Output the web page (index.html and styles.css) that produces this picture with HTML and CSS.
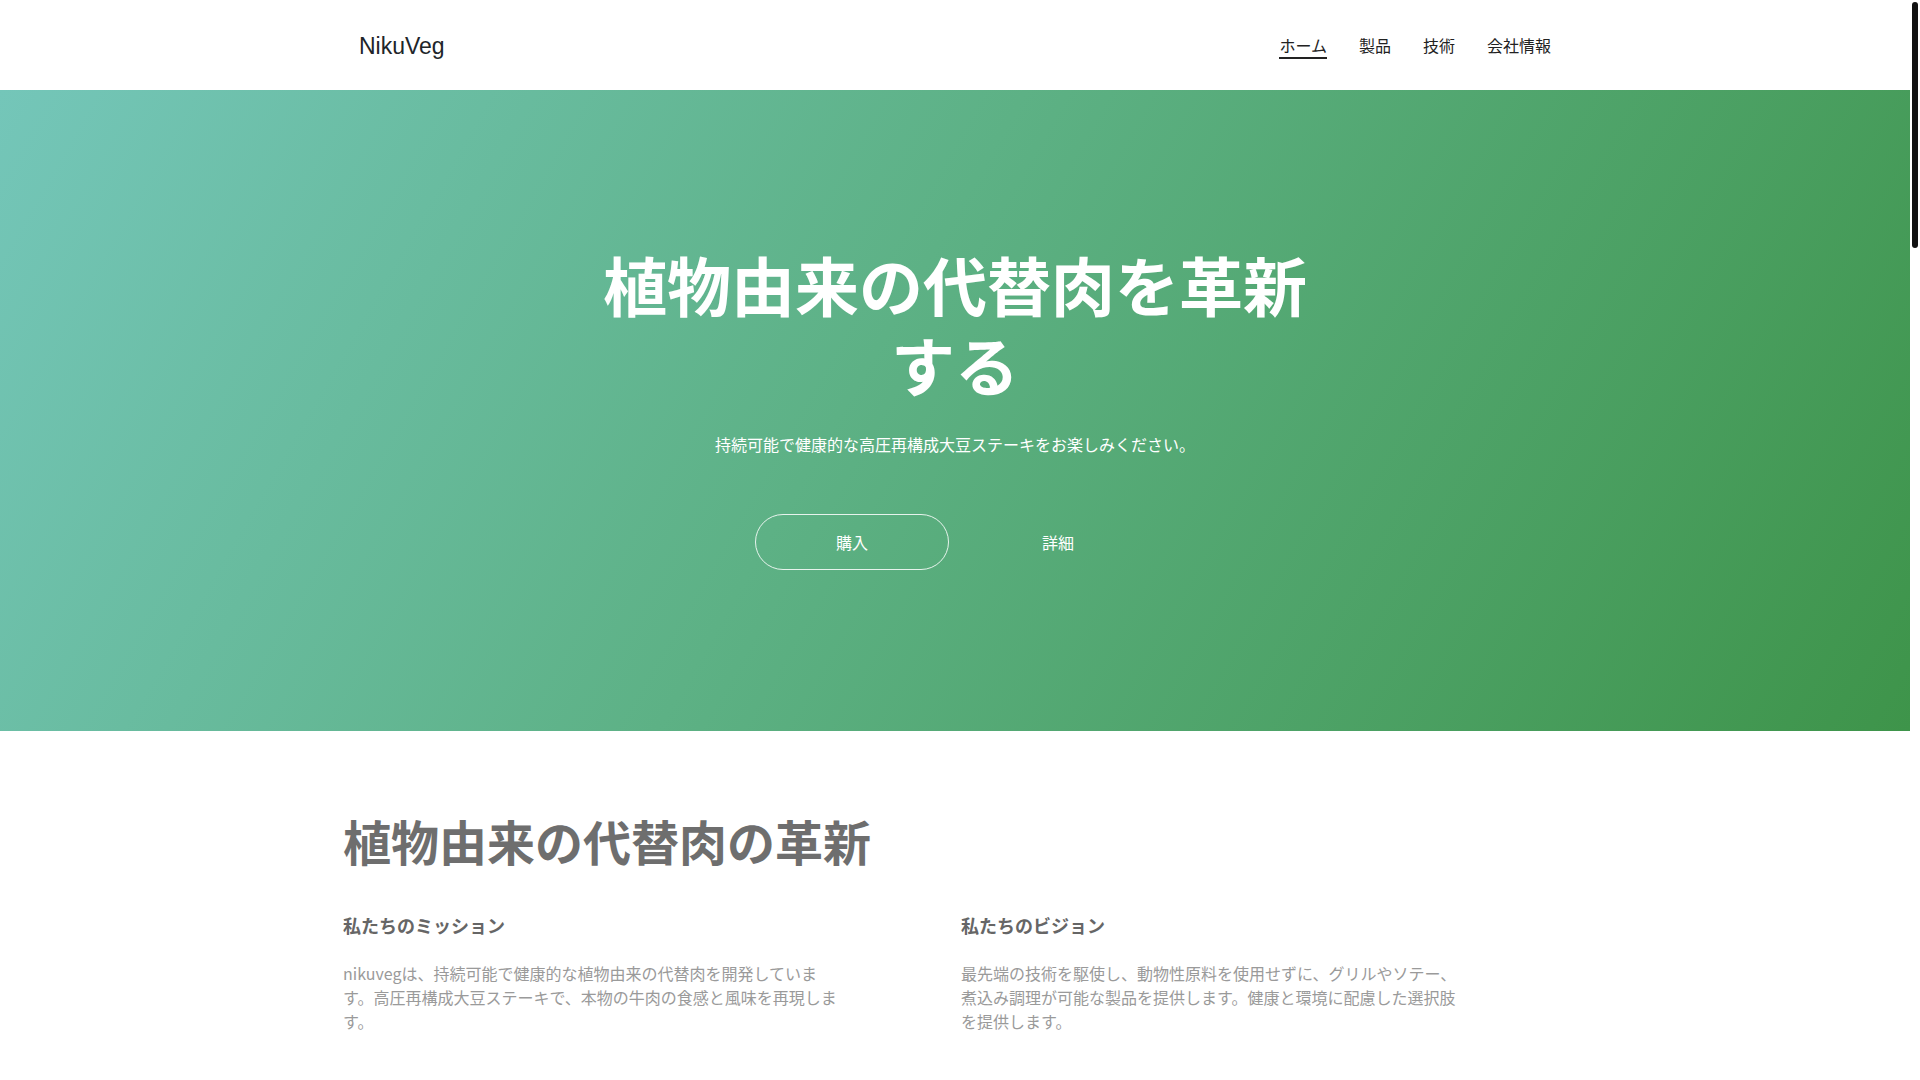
FILE: index.html
```html
<!DOCTYPE html>
<html lang="ja">
<head>
<meta charset="utf-8">
<title>NikuVeg</title>
<link rel="stylesheet" href="styles.css">
</head>
<body>
<div class="page">
<header class="site-header">
  <div class="container header-inner">
    <a class="logo" href="#">NikuVeg</a>
    <nav class="nav">
      <a class="nav-link active" href="#">ホーム</a>
      <a class="nav-link" href="#products">製品</a>
      <a class="nav-link" href="#tech">技術</a>
      <a class="nav-link" href="#company">会社情報</a>
    </nav>
  </div>
</header>

<section class="hero">
  <div class="hero-content">
    <h1 class="hero-title">植物由来の代替肉を革新する</h1>
    <p class="hero-sub">持続可能で健康的な高圧再構成大豆ステーキをお楽しみください。</p>
    <div class="hero-buttons">
      <a class="btn btn-outline" href="#products">購入</a>
      <a class="btn btn-plain" href="#about">詳細</a>
    </div>
  </div>
</section>

<section class="about" id="about">
  <div class="container">
    <h2 class="section-title">植物由来の代替肉の革新</h2>
    <div class="two-col">
      <div class="col">
        <h3 class="col-title">私たちのミッション</h3>
        <p class="col-text">nikuvegは、持続可能で健康的な植物由来の代替肉を開発しています。高圧再構成大豆ステーキで、本物の牛肉の食感と風味を再現します。</p>
      </div>
      <div class="col">
        <h3 class="col-title">私たちのビジョン</h3>
        <p class="col-text">最先端の技術を駆使し、動物性原料を使用せずに、グリルやソテー、煮込み調理が可能な製品を提供します。健康と環境に配慮した選択肢を提供します。</p>
      </div>
    </div>
  </div>
</section>

<section class="block" id="products">
  <div class="container">
    <h2 class="section-title">製品</h2>
    <div class="two-col">
      <div class="col">
        <h3 class="col-title">大豆ステーキ</h3>
        <p class="col-text">高圧再構成技術で作られた、しっかりとした噛みごたえのある大豆ステーキです。</p>
      </div>
      <div class="col">
        <h3 class="col-title">大豆ミンチ</h3>
        <p class="col-text">ハンバーグやミートソースなど、さまざまな料理にお使いいただけます。</p>
      </div>
    </div>
  </div>
</section>

<section class="block" id="tech">
  <div class="container">
    <h2 class="section-title">技術</h2>
    <div class="two-col">
      <div class="col">
        <h3 class="col-title">高圧再構成</h3>
        <p class="col-text">大豆たんぱくを高圧で再構成し、肉の繊維構造を再現します。</p>
      </div>
      <div class="col">
        <h3 class="col-title">風味設計</h3>
        <p class="col-text">植物由来の原料のみで、牛肉に近い風味を実現しています。</p>
      </div>
    </div>
  </div>
</section>

<section class="block" id="company">
  <div class="container">
    <h2 class="section-title">会社情報</h2>
    <p class="col-text">NikuVeg株式会社は、植物由来の代替肉を通じて持続可能な食の未来を目指しています。</p>
  </div>
</section>

<footer class="site-footer">
  <div class="container">
    <p>&copy; 2024 NikuVeg. All rights reserved.</p>
  </div>
</footer>
</div>

<div class="scrollbar" aria-hidden="true"><div class="scrollbar-thumb"></div></div>
</body>
</html>
```

FILE: styles.css
```css
* { box-sizing: border-box; }

html, body {
  margin: 0;
  padding: 0;
}

body {
  font-family: "Noto Sans CJK JP", "Noto Sans", sans-serif;
  color: #212529;
  background: #ffffff;
}

.page {
  margin-right: 10px;
}

a { text-decoration: none; color: inherit; }

.container {
  max-width: 1224px;
  margin: 0 auto;
}

/* Scrollbar look-alike */
.scrollbar {
  position: fixed;
  top: 0;
  right: 0;
  width: 10px;
  height: 100vh;
  background: #ffffff;
}
.scrollbar-thumb {
  margin: 2px 2px 0;
  width: 6px;
  height: 246px;
  border-radius: 3px;
  background: #111111;
}

/* Header */
.site-header {
  height: 90px;
  background: #ffffff;
}
.header-inner {
  height: 100%;
  padding: 0 16px;
  display: flex;
  align-items: center;
  justify-content: space-between;
}
.logo {
  font-family: "Liberation Sans", Arial, sans-serif;
  font-size: 23px;
  color: #212529;
  line-height: 1;
  padding-top: 2px;
}
.nav {
  display: flex;
  gap: 32px;
  padding-top: 2px;
}
.nav-link {
  font-size: 16px;
  line-height: 24px;
  color: #222222;
  border-bottom: 2px solid transparent;
}
.nav-link.active {
  border-bottom-color: #222222;
}

/* Hero */
.hero {
  height: 641px;
  padding-bottom: 8px;
  background: linear-gradient(120deg, #74c6b9 0%, #5db185 45%, #3e944a 100%);
  display: flex;
  align-items: center;
  justify-content: center;
  color: #ffffff;
  text-align: center;
}
.hero-content {
  display: flex;
  flex-direction: column;
  align-items: center;
}
.hero-title {
  margin: 0;
  max-width: 760px;
  font-size: 64px;
  line-height: 80px;
  font-weight: 700;
}
.hero-sub {
  margin: 29px 0 0;
  font-size: 16px;
  line-height: 24px;
}
.hero-buttons {
  margin-top: 58px;
  display: flex;
  gap: 12px;
}
.btn {
  width: 194px;
  height: 56px;
  border-radius: 28px;
  display: flex;
  align-items: center;
  justify-content: center;
  font-size: 16px;
  color: #ffffff;
  border: 1px solid transparent;
}
.btn-outline {
  border-color: rgba(255, 255, 255, 0.85);
}

/* About */
.about {
  padding: 81px 0 110px;
}
.block {
  padding: 85px 0 110px;
  min-height: 1000px;
}
.section-title {
  margin: 0;
  font-size: 48px;
  line-height: 1.2;
  font-weight: 700;
  color: #6e6e6e;
}
.two-col {
  margin-top: 42px;
  display: grid;
  grid-template-columns: 1fr 1fr;
  column-gap: 12px;
}
.col-title {
  margin: 0;
  font-size: 18px;
  line-height: 27px;
  font-weight: 700;
  color: #666666;
}
.col-text {
  margin: 22px 0 0;
  max-width: 500px;
  font-size: 16px;
  line-height: 24px;
  color: #9a9a9a;
}

.site-footer {
  padding: 40px 0 200px;
  color: #9a9a9a;
  font-size: 14px;
}
```
